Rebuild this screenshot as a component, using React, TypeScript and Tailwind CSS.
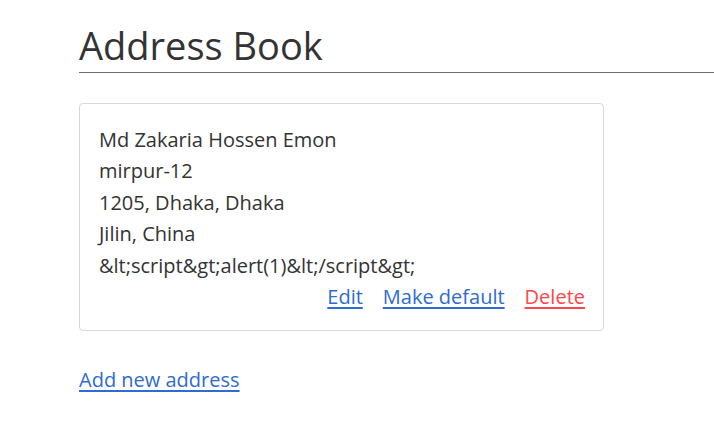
export default function App() {
  const lines = [
    "Md Zakaria Hossen Emon",
    "mirpur-12",
    "1205, Dhaka, Dhaka",
    "Jilin, China",
    "&lt;script&gt;alert(1)&lt;/script&gt;",
  ];

  return (
    <div className="min-h-screen bg-white pl-[79px] pt-[20px] font-['Open_Sans',sans-serif] text-[#333333]">
      <h1 className="border-b border-[#6e6e6e] pb-[2px] text-[38px] leading-[50px] font-normal">
        Address Book
      </h1>
      <div className="mt-[30px] w-[525px] rounded-[4px] border border-[#d8d8dc] pl-[19px] pr-[18px] pt-[20px] pb-[18px] text-[20px] leading-[31.4px]">
        {lines.map((line) => (
          <div key={line}>{line}</div>
        ))}
        <div className="flex justify-end gap-[20px]">
          <a href="#" className="text-[#2f6bd0] underline underline-offset-[3px]">
            Edit
          </a>
          <a href="#" className="text-[#2f6bd0] underline underline-offset-[3px]">
            Make default
          </a>
          <a href="#" className="text-[#ff4646] underline underline-offset-[3px]">
            Delete
          </a>
        </div>
      </div>
      <a href="#" className="mt-[33px] inline-block text-[20px] leading-[31.4px] text-[#2f6bd0] underline underline-offset-[3px]">
        Add new address
      </a>
    </div>
  );
}
